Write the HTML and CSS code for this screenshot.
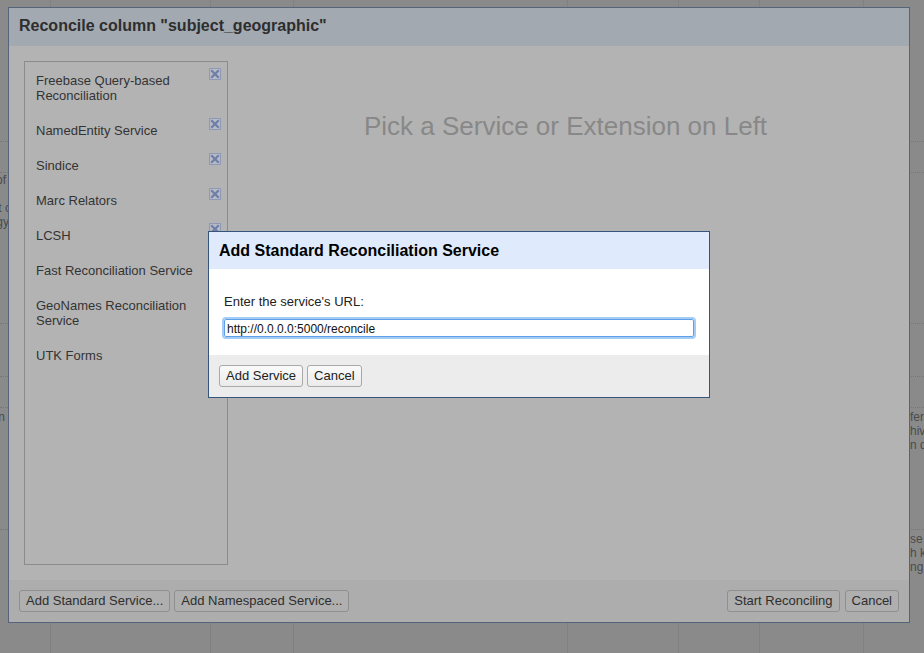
FILE: index.html
```html
<!DOCTYPE html>
<html lang="en">
<head>
<meta charset="utf-8">
<title>Reconcile column</title>
<link rel="stylesheet" href="styles.css">
</head>
<body>
<div class="bg">
  <div class="bg-row r1"></div>
  <div class="bg-row r2"></div>
  <div class="bg-row r3">
    <div class="frag">
      <div class="fl e6">list of</div>
      <div class="fl e6"></div>
      <div class="fl e11">text c</div>
      <div class="fl e9">ology</div>
    </div>
  </div>
  <div class="bg-row r4"></div>
  <div class="bg-row r5"></div>
  <div class="bg-row r6 pad">
    <div class="frag">
      <div class="fl e5">in</div>
    </div>
    <div class="fr">
      <div>ference</div>
      <div>hives</div>
      <div>n data</div>
    </div>
  </div>
  <div class="bg-row r7 pad">
    <div class="fr">
      <div>se</div>
      <div>h ke</div>
      <div>ng</div>
    </div>
  </div>
</div>

<div class="dialog main-dlg">
  <div class="main-head">Reconcile column "subject_geographic"</div>
  <div class="main-body">
    <div class="svc-panel">
      <div class="svc"><span class="svc-name">Freebase Query-based Reconciliation</span><svg class="svc-x" width="12" height="12" viewBox="0 0 12 12"><rect x="0.5" y="0.5" width="11" height="11" fill="#b6bac5" stroke="#8d99b7"/><path d="M3 3 L9 9 M9 3 L3 9" stroke="#6e7ea6" stroke-width="2.2" stroke-linecap="square"/></svg></div>
      <div class="svc"><span class="svc-name">NamedEntity Service</span><svg class="svc-x" width="12" height="12" viewBox="0 0 12 12"><rect x="0.5" y="0.5" width="11" height="11" fill="#b6bac5" stroke="#8d99b7"/><path d="M3 3 L9 9 M9 3 L3 9" stroke="#6e7ea6" stroke-width="2.2" stroke-linecap="square"/></svg></div>
      <div class="svc"><span class="svc-name">Sindice</span><svg class="svc-x" width="12" height="12" viewBox="0 0 12 12"><rect x="0.5" y="0.5" width="11" height="11" fill="#b6bac5" stroke="#8d99b7"/><path d="M3 3 L9 9 M9 3 L3 9" stroke="#6e7ea6" stroke-width="2.2" stroke-linecap="square"/></svg></div>
      <div class="svc"><span class="svc-name">Marc Relators</span><svg class="svc-x" width="12" height="12" viewBox="0 0 12 12"><rect x="0.5" y="0.5" width="11" height="11" fill="#b6bac5" stroke="#8d99b7"/><path d="M3 3 L9 9 M9 3 L3 9" stroke="#6e7ea6" stroke-width="2.2" stroke-linecap="square"/></svg></div>
      <div class="svc"><span class="svc-name">LCSH</span><svg class="svc-x" width="12" height="12" viewBox="0 0 12 12"><rect x="0.5" y="0.5" width="11" height="11" fill="#b6bac5" stroke="#8d99b7"/><path d="M3 3 L9 9 M9 3 L3 9" stroke="#6e7ea6" stroke-width="2.2" stroke-linecap="square"/></svg></div>
      <div class="svc"><span class="svc-name">Fast Reconciliation Service</span><svg class="svc-x" width="12" height="12" viewBox="0 0 12 12"><rect x="0.5" y="0.5" width="11" height="11" fill="#b6bac5" stroke="#8d99b7"/><path d="M3 3 L9 9 M9 3 L3 9" stroke="#6e7ea6" stroke-width="2.2" stroke-linecap="square"/></svg></div>
      <div class="svc"><span class="svc-name">GeoNames Reconciliation Service</span><svg class="svc-x" width="12" height="12" viewBox="0 0 12 12"><rect x="0.5" y="0.5" width="11" height="11" fill="#b6bac5" stroke="#8d99b7"/><path d="M3 3 L9 9 M9 3 L3 9" stroke="#6e7ea6" stroke-width="2.2" stroke-linecap="square"/></svg></div>
      <div class="svc"><span class="svc-name">UTK Forms</span></div>
    </div>
    <div class="svc-detail">
      <div class="pick">Pick a Service or Extension on Left</div>
    </div>
  </div>
  <div class="main-foot">
    <div class="btns">
      <button class="btn dim">Add Standard Service...</button>
      <button class="btn dim">Add Namespaced Service...</button>
    </div>
    <div class="btns wide">
      <button class="btn dim">Start Reconciling</button>
      <button class="btn dim">Cancel</button>
    </div>
  </div>
</div>

<div class="dialog add-dlg">
  <div class="add-head">Add Standard Reconciliation Service</div>
  <div class="add-body">
    <div class="add-label">Enter the service's URL:</div>
    <input class="add-input" type="text" value="http://0.0.0.0:5000/reconcile">
  </div>
  <div class="add-foot">
    <div class="btns">
      <button class="btn">Add Service</button>
      <button class="btn">Cancel</button>
    </div>
  </div>
</div>
</body>
</html>
```

FILE: styles.css
```css
* { box-sizing: border-box; }

html, body {
  margin: 0;
  padding: 0;
  width: 924px;
  height: 653px;
  overflow: hidden;
}

body {
  font-family: "Liberation Sans", Arial, Helvetica, sans-serif;
  font-size: 13px;
  color: #333;
  background: #8a8a8a;
  position: relative;
}

/* ---------- background page (dimmed) ---------- */
.bg {
  height: 653px;
  display: flex;
  flex-direction: column;
  background-color: #8a8a8a;
  background-image:
    linear-gradient(#818181, #818181),
    linear-gradient(#818181, #818181),
    linear-gradient(#818181, #818181),
    linear-gradient(#818181, #818181),
    linear-gradient(#818181, #818181),
    linear-gradient(#818181, #818181),
    linear-gradient(#818181, #818181);
  background-size: 1px 100%;
  background-repeat: no-repeat;
  background-position: 50px 0, 210px 0, 293px 0, 567px 0, 678px 0, 759px 0, 863px 0;
  font-size: 12px;
  line-height: 14px;
  color: #4b4b4b;
}

.bg-row {
  display: flex;
  align-items: flex-start;
  border-bottom: 1px dotted #777;
}
.bg-row.pad { padding-top: 2px; }
.r1 { height: 142px; }
.r2 { height: 31px; }
.r3 { height: 151px; }
.r4 { height: 53px; }
.r5 { height: 31px; }
.r6 { height: 122px; }
.r7 { flex: 1; border-bottom: 0; }

.frag {
  display: flex;
  flex-direction: column;
  align-items: flex-start;
}
.fl {
  display: flex;
  justify-content: flex-end;
  white-space: nowrap;
  height: 14px;
}
.e4 { width: 4px; }
.e5 { width: 5px; }
.e6 { width: 6px; }
.e9 { width: 9px; }
.e11 { width: 11px; }

.fr {
  margin-left: auto;
  width: 15px;
  padding-left: 1px;
  overflow: hidden;
  white-space: nowrap;
}

/* ---------- dialogs ---------- */
.dialog {
  position: absolute;
  display: flex;
  flex-direction: column;
}

.main-dlg {
  left: 8px;
  top: 7px;
  width: 902px;
  height: 616px;
  border: 1px solid #55647a;
  background: #b3b3b3;
}

.main-head {
  height: 38px;
  flex: none;
  display: flex;
  align-items: center;
  padding: 0 10px 2px;
  background: #a2a9b1;
  font-weight: bold;
  font-size: 16px;
  color: #2e2e2e;
}

.main-body {
  flex: 1;
  display: flex;
  padding: 15px;
  background: #b3b3b3;
}

.svc-panel {
  width: 204px;
  flex: none;
  border: 1px solid #8b8b8b;
  padding-top: 1px;
}

.svc {
  display: flex;
  align-items: flex-start;
  padding: 10px 6px 10px 11px;
  line-height: 15px;
  color: #333;
}
.svc-name { flex: 1; }
.svc-x {
  flex: none;
  margin-top: -5px;
  display: block;
}

.svc-detail {
  flex: 1;
  margin-left: 9px;
  padding-top: 50px;
  text-align: center;
}
.pick {
  font-size: 26px;
  line-height: 30px;
  color: #888;
}

.main-foot {
  height: 42px;
  flex: none;
  display: flex;
  justify-content: space-between;
  align-items: flex-start;
  padding: 10px 10px 0;
  background: #adadad;
}

.btns {
  display: flex;
  gap: 4px;
}
.btns.wide { gap: 5px; }

.btn {
  height: 22px;
  padding: 0 6px;
  margin: 0;
  border: 1px solid #a9a9a9;
  border-radius: 3px;
  background: linear-gradient(#fafafa, #ebebeb);
  font-family: "Liberation Sans", Arial, Helvetica, sans-serif;
  font-size: 13px;
  line-height: 20px;
  color: #222;
}
.btn.dim {
  border-color: #8f8f8f;
  background: #afafaf;
  color: #2e2e2e;
}

/* ---------- add service dialog ---------- */
.add-dlg {
  left: 208px;
  top: 231px;
  width: 502px;
  height: 167px;
  border: 1px solid #37547b;
  background: #fff;
}

.add-head {
  height: 37px;
  flex: none;
  display: flex;
  align-items: center;
  padding: 0 10px;
  background: #dfebfc;
  font-weight: bold;
  font-size: 16px;
  color: #000;
}

.add-body {
  height: 86px;
  flex: none;
  padding: 25px 15px 0;
  background: #fff;
  display: flex;
  flex-direction: column;
  align-items: flex-start;
}

.add-label {
  line-height: 16px;
  color: #222;
}

.add-input {
  margin-top: 9px;
  width: 470px;
  height: 18px;
  padding: 1px 2px 0;
  border: 1px solid #5e9fe6;
  outline: 2px solid #a3ccf7;
  border-radius: 2px;
  font-family: "Liberation Sans", Arial, Helvetica, sans-serif;
  font-size: 12px;
  color: #111;
  background: #fff;
}

.add-foot {
  flex: 1;
  padding: 10px 10px 0;
  background: #ececec;
}
```
